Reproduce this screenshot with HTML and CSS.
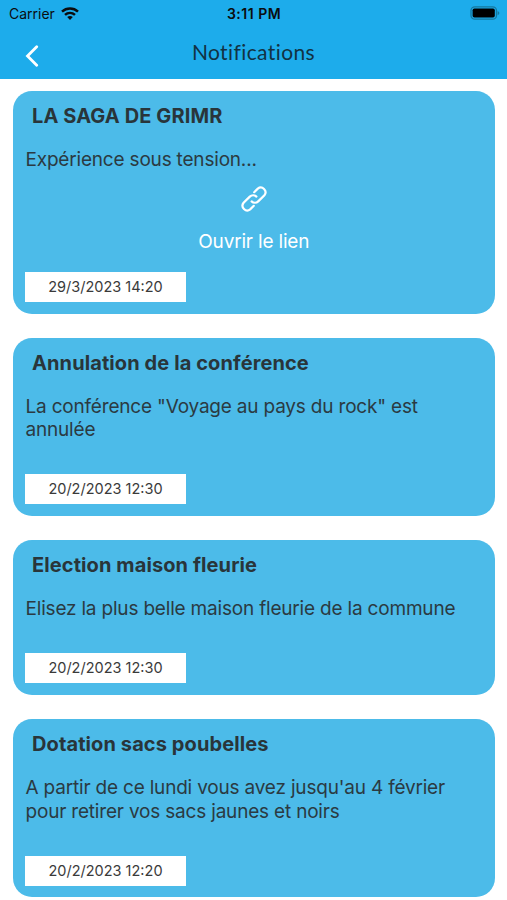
FILE: index.html
```html
<!DOCTYPE html>
<html lang="fr"><head><meta charset="utf-8"><title>Notifications</title><link rel="stylesheet" href="styles.css"></head>
<body>
<header class="top">
<div class="status">
<div class="carrier"><span>Carrier</span><svg class="wifi" viewBox="0 0 18 13"><g fill="none" stroke="#0b0d0f" stroke-width="2.5"><path d="M1 4.6C5.6.4 12.4.4 17 4.6"/><path d="M4 7.9c2.9-2.6 7.1-2.6 10 0"/></g><path fill="#0b0d0f" d="M6.2 10.1c1.7-1.4 3.9-1.4 5.6 0L9 13z"/></svg></div>
<span class="clock">3:11 PM</span>
<svg class="battery" viewBox="0 0 30 14"><rect x="1" y=".8" width="25.5" height="12.4" rx="3.8" fill="none" stroke="#15789f" stroke-width="1.3"/><rect x="2.6" y="2.4" width="22.2" height="9.2" rx="1.8" fill="#000"/><path d="M27.6 4.9c2.3.8 2.3 3.4 0 4.2z" fill="#15789f"/></svg>
</div>
<div class="nav"><svg class="back" viewBox="0 0 14 22"><path d="M11.7 1.7 2.5 11l9.2 9.3" fill="none" stroke="#fff" stroke-width="2.8" stroke-linecap="round"/></svg><h1>Notifications</h1></div>
</header>
<main>
<article class="card"><h2>LA SAGA DE GRIMR</h2><p>Expérience sous tension...</p>
<a class="link"><svg viewBox="0 0 28 28"><g fill="none" stroke="#fff" stroke-width="2.2" stroke-linecap="round"><path d="M14.2 7.2 17.8 3.6a4.7 4.7 0 0 1 6.6 6.6L18.2 16.4a4.7 4.7 0 0 1-6.6 0"/><path d="M13.8 20.8 10.2 24.4a4.7 4.7 0 0 1-6.6-6.6L9.8 11.6a4.7 4.7 0 0 1 6.6 0"/></g></svg><span>Ouvrir le lien</span></a>
<time>29/3/2023 14:20</time></article>
<article class="card"><h2>Annulation de la conférence</h2><p>La conférence "Voyage au pays du rock" est<br>annulée</p><time>20/2/2023 12:30</time></article>
<article class="card"><h2>Election maison fleurie</h2><p>Elisez la plus belle maison fleurie de la commune</p><time>20/2/2023 12:30</time></article>
<article class="card"><h2>Dotation sacs poubelles</h2><p>A partir de ce lundi vous avez jusqu'au 4 février<br>pour retirer vos sacs jaunes et noirs</p><time>20/2/2023 12:20</time></article>
</main>
</body></html>
```
FILE: styles.css
```css
* { box-sizing: border-box; }
body { margin: 0; background: #fff; color: #2b3a42; font-family: Inter, sans-serif; height: 900px; overflow: hidden; }
.top { height: 79px; background: #1daceb; }
.status { height: 27px; display: grid; grid-template-columns: 1fr auto 1fr; align-items: center; padding: 0 7px 0 8px; color: #0b0d0f; }
.carrier { display: flex; align-items: center; gap: 6px; padding-left: 1px; font-size: 14px; }
.wifi { width: 18px; height: 13px; margin-top: -1px; }
.clock { font-size: 14px; font-weight: 600; letter-spacing: .5px; }
.battery { width: 30px; height: 14px; margin-top: -1px; justify-self: end; }
.nav { height: 52px; display: grid; grid-template-columns: 1fr auto 1fr; padding: 0 25px; }
.back { width: 14px; height: 22px; margin-top: 18px; }
h1 { margin: 11px 0 0; font: 400 21px/27px Lato, sans-serif; letter-spacing: .4px; color: #123243; }
main { padding: 12.4px 12.5px 0 13px; }
.card { background: #4cbbe9; border-radius: 19px; padding: 12px 12px 11.7px; margin-bottom: 24.5px; }
h2 { margin: 0 0 19px 7px; font-size: 20px; line-height: 26px; font-weight: 650; letter-spacing: .1px; color: #29353a; white-space: nowrap; }
p { margin: 0 0 32.5px .5px; font-size: 19px; line-height: 23.3px; letter-spacing: -.19px; white-space: nowrap; }
.link { display: flex; flex-direction: column; align-items: center; margin-top: -19.5px; margin-bottom: 17.5px; color: #fff; font-size: 19px; line-height: 24px; letter-spacing: -.18px; }
.link svg { width: 28px; height: 28px; margin-bottom: 17.8px; }
time { display: block; width: 161px; height: 30px; background: #fff; text-align: center; font-size: 14.5px; line-height: 30px; color: #3a3a3a; }
```
